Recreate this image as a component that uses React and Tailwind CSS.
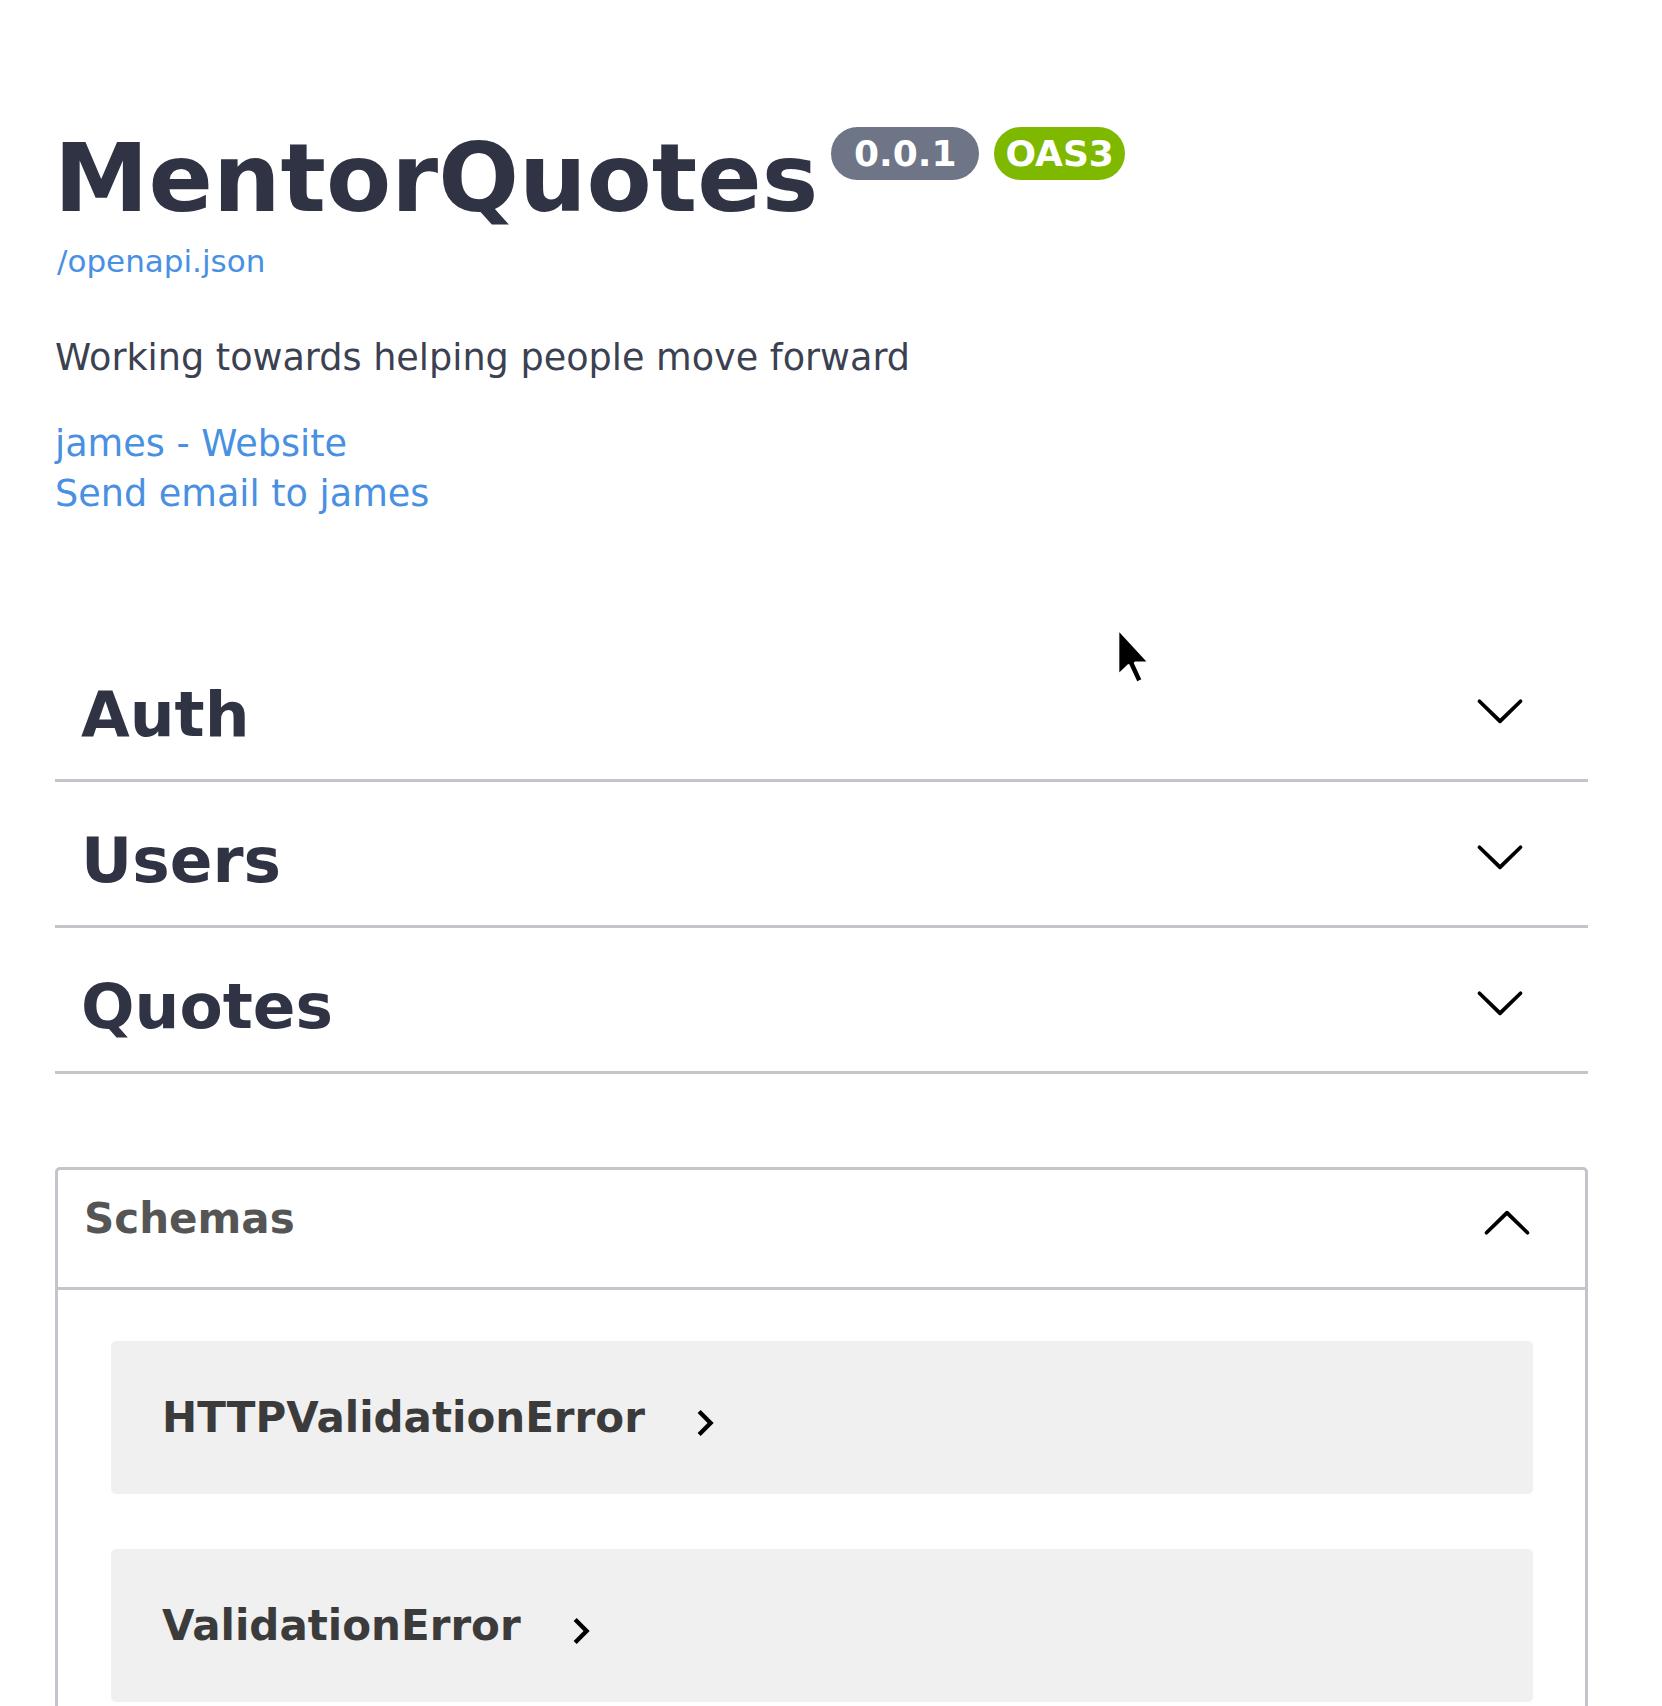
import React from "react";

const ARROW =
  "M17.418 6.109c.272-.268.709-.268.979 0s.271.701 0 .969l-7.908 7.83c-.27.268-.707.268-.979 0l-7.908-7.83c-.27-.268-.27-.701 0-.969.271-.268.709-.268.979 0L10 13.25l7.418-7.141z";

function Chevron({ up = false, className = "" }) {
  return (
    <svg
      viewBox="0 0 20 20"
      className={className}
      style={up ? { transform: "rotate(180deg)" } : undefined}
    >
      <path d={ARROW} fill="#000" />
    </svg>
  );
}

function Tag({ name }) {
  return (
    <h3 className="flex h-[132px] items-start justify-between border-b-[3px] border-[#c4c5ca] mb-[14px]">
      <span className="pl-[26px] pt-[28px] text-[63px] leading-[74px] font-bold text-[#2f3344]">
        {name}
      </span>
      <Chevron className="mt-[34px] mr-[62px] h-[52px] w-[52px] shrink-0" />
    </h3>
  );
}

function Model({ name }) {
  return (
    <div className="flex h-[153px] items-center rounded-[5px] bg-[#f0f0f0] pl-[51px]">
      <span className="text-[42px] leading-[49px] font-bold text-[#3b3b3b]">{name}</span>
      <svg viewBox="0 0 24 24" className="ml-[34px] mt-[10px] h-[52px] w-[52px] shrink-0">
        <path d="M10 6L8.59 7.41 13.17 12l-4.58 4.59L10 18l6-6z" fill="#000" />
      </svg>
    </div>
  );
}

export default function App() {
  return (
    <div className="relative min-h-screen bg-white font-['DejaVu_Sans',sans-serif]">
      <div className="pl-[55px] pr-[74px] pt-[127px] pb-[60px]">
        {/* Info */}
        <div className="flex items-start">
          <h1 className="mt-[4px] -ml-[1px] text-[95px] leading-[94px] font-bold text-[#2f3344]">
            MentorQuotes
          </h1>
          <span className="ml-[13px] flex h-[53px] w-[148px] items-center justify-center rounded-full bg-[#6e7587] text-[36px] leading-none font-bold text-white">
            0.0.1
          </span>
          <span className="ml-[15px] flex h-[53px] w-[131px] items-center justify-center rounded-full bg-[#7eb900] text-[36px] leading-none font-bold text-white">
            OAS3
          </span>
        </div>
        <div className="mt-[18px] ml-[2px] text-[31px] leading-[36px] text-[#4990e2]">
          /openapi.json
        </div>
        <p className="mt-[58px] text-[36.6px] leading-[42px] text-[#3b4151]">
          Working towards helping people move forward
        </p>
        <div className="mt-[40px] flex flex-col text-[36.6px] leading-[50px] text-[#4990e2]">
          <span>james - Website</span>
          <span>Send email to james</span>
        </div>

        {/* Tags */}
        <div className="mt-[131px] flex flex-col">
          <Tag name="Auth" />
          <Tag name="Users" />
          <Tag name="Quotes" />

          {/* Schemas */}
          <section className="mt-[79px] rounded-[5px] border-[3px] border-[#c4c5ca]">
            <div className="flex h-[120px] items-start justify-between border-b-[3px] border-[#c4c5ca]">
              <span className="pl-[26px] pt-[24px] text-[42px] leading-[49px] font-bold text-[#555555]">
                Schemas
              </span>
              <Chevron up className="mt-[28px] mr-[52px] h-[52px] w-[52px] shrink-0" />
            </div>
            <div className="flex flex-col gap-[55px] pl-[53px] pr-[52px] pt-[51px] pb-[40px]">
              <Model name="HTTPValidationError" />
              <Model name="ValidationError" />
            </div>
          </section>
        </div>
      </div>

      {/* Mouse cursor */}
      <svg
        viewBox="0 0 13 21"
        className="absolute left-[1115px] top-[626px] h-[61px] w-[38px]"
      >
        <path
          d="M1 1 L1 17 L4.6 13.6 L7.4 19.6 L9.6 18.6 L6.9 12.7 L11.8 12.7 Z"
          fill="#000"
          stroke="#fff"
          strokeWidth="0.9"
          strokeLinejoin="round"
        />
      </svg>
    </div>
  );
}
